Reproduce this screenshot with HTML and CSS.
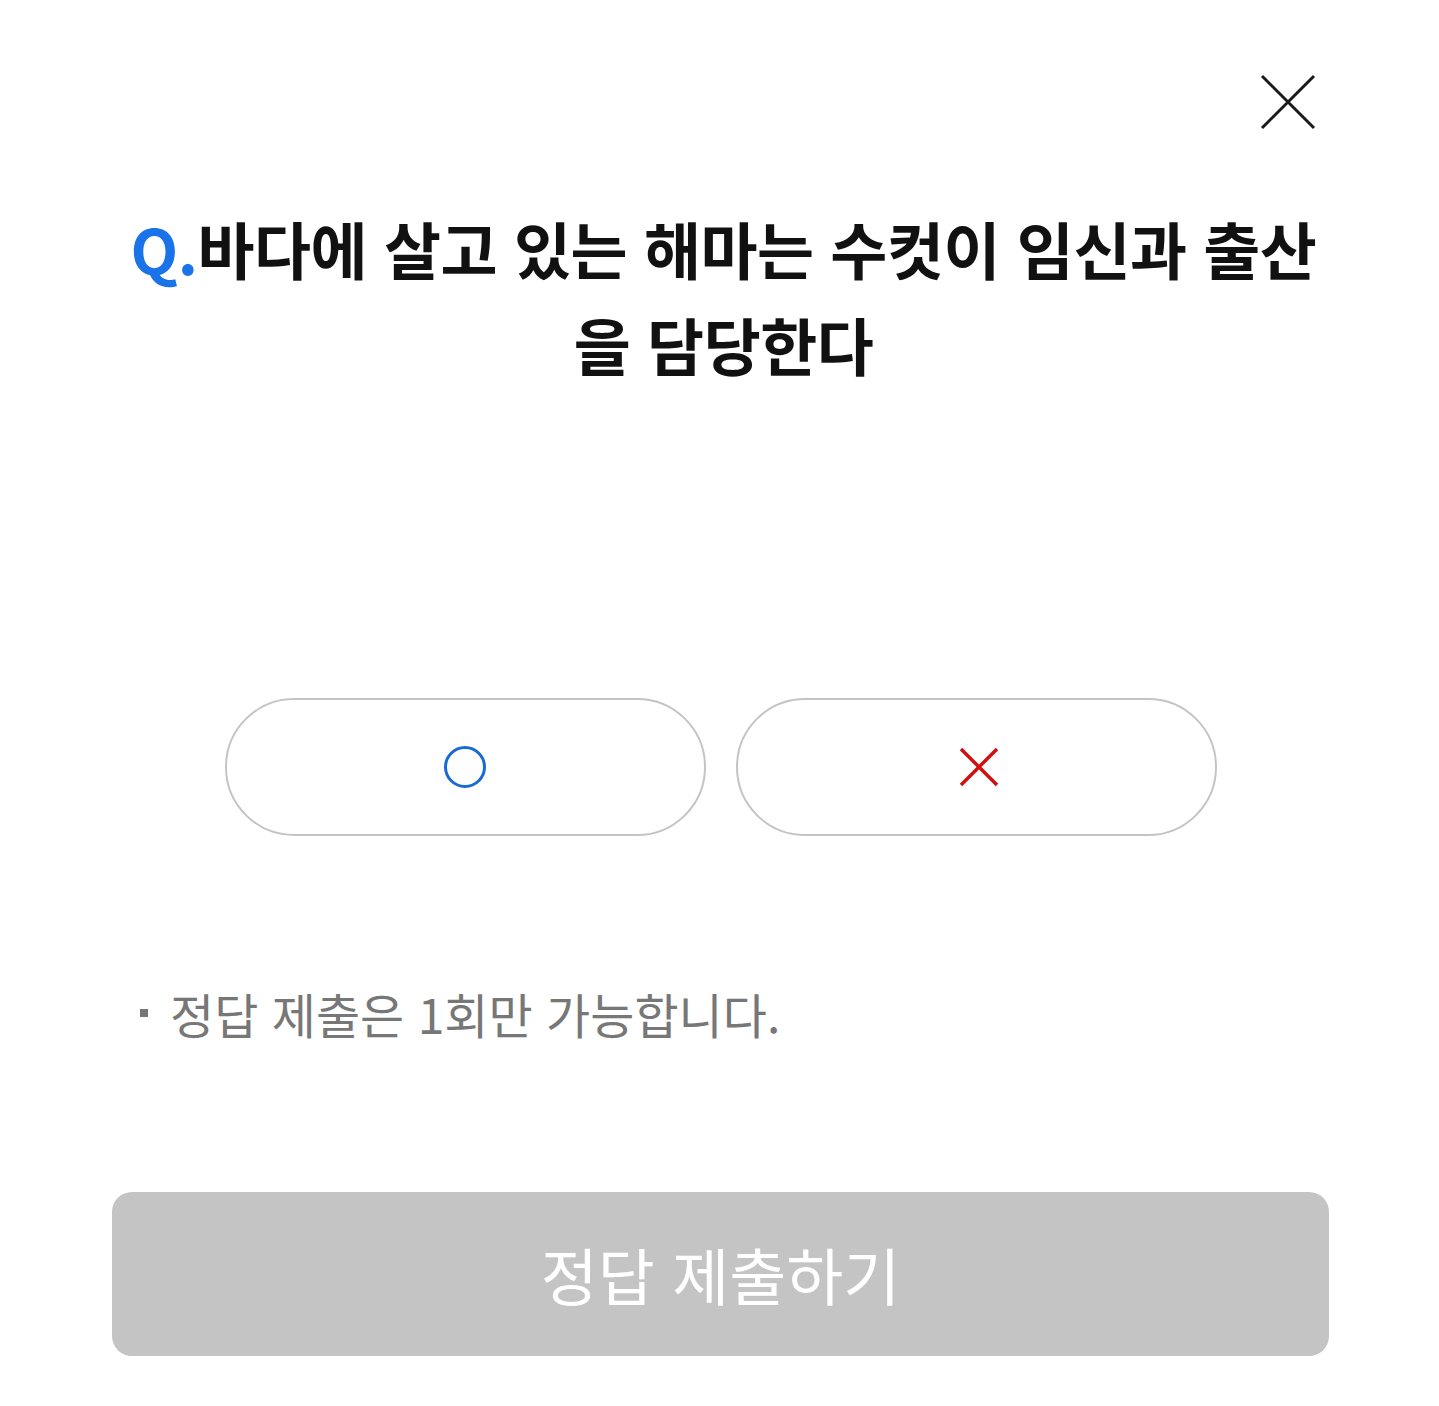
FILE: index.html
```html
<!DOCTYPE html>
<html lang="ko">
<head>
  <meta charset="UTF-8" />
  <meta name="viewport" content="width=device-width, initial-scale=1" />
  <title>OX 퀴즈</title>
  <link rel="stylesheet" href="styles.css">
</head>
<body>
  <div class="quiz">
    <div class="quiz-top">
      <button class="close-btn" type="button" aria-label="닫기">
        <svg width="56" height="56" viewBox="0 0 56 56">
          <path d="M2 2 L54 54 M54 2 L2 54" stroke="#1a1a1a" stroke-width="3" fill="none" />
        </svg>
      </button>
    </div>

    <h1 class="question"><span class="q-mark">Q.</span>바다에 살고 있는 해마는 수컷이 임신과 출산<br>을 담당한다</h1>

    <div class="choices">
      <button class="choice" type="button" aria-label="O">
        <svg width="44" height="44" viewBox="0 0 44 44">
          <circle cx="22" cy="22" r="19.5" stroke="#1a6bd0" stroke-width="3" fill="none" />
        </svg>
      </button>
      <button class="choice" type="button" aria-label="X">
        <svg width="40" height="40" viewBox="0 0 40 40">
          <path d="M2 2 L38 38 M38 2 L2 38" stroke="#d40d0d" stroke-width="3.4" fill="none" />
        </svg>
      </button>
    </div>

    <p class="note"><span class="dot"></span>정답 제출은 1회만 가능합니다.</p>

    <button class="submit" type="button" disabled>정답 제출하기</button>
  </div>
</body>
</html>
```

FILE: styles.css
```css
body {
  margin: 0;
  background-color: #fff;
  color: #111;
  font-family: 'Noto Sans CJK KR', 'Noto Sans', sans-serif;
}
.quiz {
  padding: 74px 110px 0 112px;
  box-sizing: border-box;
}
.quiz-top {
  display: flex;
  justify-content: flex-end;
  padding-right: 13px;
}
.close-btn {
  border: none;
  background: none;
  padding: 0;
  width: 56px;
  height: 56px;
  cursor: pointer;
}
.close-btn svg {
  display: block;
}
.question {
  margin: 70px 0 0;
  text-align: center;
  font-size: 62px;
  font-weight: 700;
  line-height: 96px;
  letter-spacing: -0.5px;
  color: #111;
  padding: 0 0 0 6px;
  white-space: nowrap;
}
.q-mark {
  color: #1a73e8;
}
.choices {
  display: flex;
  justify-content: center;
  gap: 30px;
  margin-top: 306px;
}
.choice {
  width: 481px;
  height: 138px;
  border: 2px solid #c4c4c4;
  border-radius: 69px;
  background: #fff;
  display: flex;
  align-items: center;
  justify-content: center;
  cursor: pointer;
}
.choice:last-child svg {
  margin-left: 6px;
}
.choice svg {
  display: block;
}
.note {
  margin: 147px 0 0 28px;
  font-size: 48px;
  line-height: 60px;
  color: #777;
  display: flex;
  align-items: center;
}
.dot {
  width: 8px;
  height: 8px;
  background-color: #777;
  margin-right: 22px;
}
.submit {
  display: block;
  width: 100%;
  height: 164px;
  margin-top: 149px;
  border: none;
  border-radius: 20px;
  background-color: #c4c4c4;
  color: #fff;
  font-family: 'Noto Sans CJK KR', 'Noto Sans', sans-serif;
  font-size: 62px;
  font-weight: 400;
}
```
